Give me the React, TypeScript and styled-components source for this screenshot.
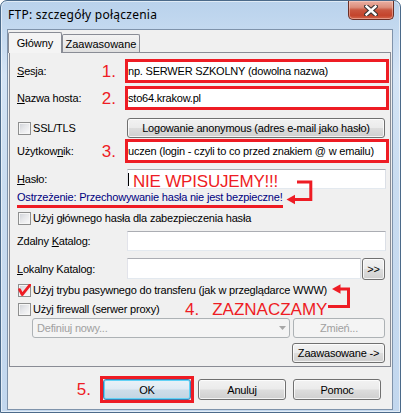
import React from 'react';
import styled, { createGlobalStyle, css } from 'styled-components';

const RED = '#ee1c24';
const UI_FONT = '"Liberation Sans", Arial, sans-serif';

const GlobalStyle = createGlobalStyle`
  html, body { margin: 0; padding: 0; background: #fff; }
  body { font-family: ${UI_FONT}; font-size: 11px; letter-spacing: -0.2px; color: #000; }
  * { box-sizing: border-box; }
`;

const Window = styled.div`
  width: 401px;
  height: 413px;
  border: 1px solid #4b6a8a;
  border-radius: 7px 7px 0 0;
  padding: 0 7px 2px 6px;
  display: flex;
  flex-direction: column;
  background: linear-gradient(180deg, #b9d2ec 0%, #d4e4f5 18%, #c9dcf0 45%, #c2d7ee 100%);
  box-shadow: inset 0 0 0 1px rgba(255, 255, 255, 0.55);
`;

const TitleBar = styled.div`
  height: 28px;
  flex: none;
  display: flex;
  align-items: flex-start;
  justify-content: space-between;
`;

const Title = styled.div`
  margin-top: 6px;
  padding-left: 1px;
  font-family: "Noto Sans", "Open Sans", sans-serif;
  font-size: 12px;
  letter-spacing: 0.25px;
  line-height: 16px;
  color: #000;
`;

const CloseButton = styled.div`
  width: 46px;
  height: 19px;
  margin-right: -1px;
  border: 1px solid #6a2f26;
  border-top: none;
  border-radius: 0 0 5px 5px;
  background: linear-gradient(180deg, #eab0a3 0%, #dc8e7c 35%, #c9563f 50%, #c4442c 80%, #d2664c 100%);
  box-shadow: inset 0 0 0 1px rgba(255, 220, 210, 0.45);
  display: flex;
  align-items: center;
  justify-content: center;
`;

const Client = styled.div`
  flex: 1;
  display: flex;
  flex-direction: column;
  border: 1px solid #7f93ab;
  background: #f0f0f0;
`;

const TabRow = styled.div`
  height: 22px;
  padding-top: 2px;
  display: flex;
  align-items: flex-end;
  flex: none;
`;

const Tab = styled.div<{ $active?: boolean }>`
  display: flex;
  align-items: center;
  justify-content: center;
  border: 1px solid #898c95;
  border-bottom: none;
  border-radius: 2px 2px 0 0;
  white-space: nowrap;
  letter-spacing: 0;
  ${(p) =>
    p.$active
      ? css`
          width: 54px;
          height: 21px;
          margin-bottom: -1px;
          background: #f4f4f4;
          position: relative;
          z-index: 1;
        `
      : css`
          width: 78px;
          height: 18px;
          background: linear-gradient(180deg, #f3f3f3 0%, #ebebeb 50%, #dfdfdf 100%);
        `}
`;

const Panel = styled.div`
  position: relative;
  margin: 0 1px;
  border: 1px solid #898c95;
  background: #f0f0f0;
  padding: 0 4px 3px 7px;
  display: flex;
  flex-direction: column;
  flex: none;
`;

const Row = styled.div<{ $mt: number; $h?: number; $align?: string; $justify?: string }>`
  display: flex;
  align-items: ${(p) => p.$align ?? 'center'};
  justify-content: ${(p) => p.$justify ?? 'flex-start'};
  margin-top: ${(p) => p.$mt}px;
  ${(p) => (p.$h ? `height: ${p.$h}px;` : '')}
`;

const LabelCell = styled.div<{ $w?: number }>`
  width: ${(p) => p.$w ?? 110}px;
  flex: none;
  display: flex;
  align-items: center;
  justify-content: space-between;
  align-self: stretch;
`;

const Label = styled.span`
  white-space: nowrap;
  line-height: 13px;
`;

const Accel = styled.span`
  text-decoration: underline;
`;

const Marker = styled.span<{ $mr?: number }>`
  color: ${RED};
  font-family: ${UI_FONT};
  font-size: 17px;
  letter-spacing: 0;
  line-height: 17px;
  margin-right: ${(p) => p.$mr ?? 11}px;
  white-space: nowrap;
`;

const TextBox = styled.div<{ $marked?: boolean; $w?: number }>`
  ${(p) => (p.$w ? `width: ${p.$w}px; flex: none;` : 'flex: 1;')}
  height: 100%;
  background: #fff;
  display: flex;
  align-items: center;
  white-space: nowrap;
  overflow: visible;
  ${(p) =>
    p.$marked
      ? css`
          border: 3px solid ${RED};
          margin: 0 -3px 0 -2px;
          padding-left: 0;
        `
      : css`
          border: 1px solid;
          border-color: #abadb3 #dbdfe6 #e3e9ef #e2e3ea;
          padding-left: 0;
        `}
`;

const Caret = styled.span`
  width: 1px;
  height: 13px;
  background: #000;
  flex: none;
`;

const Shout = styled.span`
  color: ${RED};
  font-size: 17px;
  letter-spacing: -0.2px;
  line-height: 18px;
  margin-left: 4px;
  align-self: flex-start;
  margin-top: 3px;
`;

const Warning = styled.span`
  display: inline-block;
  color: #000080;
  line-height: 13px;
  padding-bottom: 1px;
  border-bottom: 3px solid ${RED};
  white-space: nowrap;
`;

const CheckBox = styled.span`
  width: 13px;
  height: 13px;
  flex: none;
  margin-left: 1px;
  border: 1px solid #8e8f8f;
  background: linear-gradient(135deg, #cdd0d5 0%, #e6e7ea 45%, #fbfbfb 100%);
  box-shadow: inset 0 0 0 1px #f6f6f6;
  display: flex;
  align-items: center;
  justify-content: center;
`;

const CheckText = styled.span`
  margin-left: 2px;
  white-space: nowrap;
  line-height: 13px;
`;

const CheckGroup = styled.div<{ $w?: number }>`
  display: flex;
  align-items: center;
  ${(p) => (p.$w ? `width: ${p.$w}px; flex: none;` : '')}
`;

type Kind = 'normal' | 'default' | 'disabled';

const Btn = styled.div<{ $w: number; $h?: number; $kind?: Kind; $ml?: number; $mr?: number }>`
  width: ${(p) => p.$w}px;
  height: ${(p) => p.$h ?? 20}px;
  flex: none;
  margin-left: ${(p) => p.$ml ?? 0}px;
  margin-right: ${(p) => p.$mr ?? 0}px;
  display: flex;
  align-items: center;
  justify-content: center;
  font-family: ${UI_FONT};
  font-size: 11px;
  white-space: nowrap;
  border-radius: 3px;
  border: 1px solid #707070;
  color: #000;
  background: linear-gradient(180deg, #f2f2f2 0%, #ebebeb 48%, #dddddd 52%, #cfcfcf 100%);
  box-shadow: inset 0 0 0 1px rgba(255, 255, 255, 0.75);
  ${(p) =>
    p.$kind === 'default' &&
    css`
      border-color: #3c7fb1;
      background: linear-gradient(180deg, #eaf2f8 0%, #dfeaf3 48%, #cddde9 52%, #c3d5e3 100%);
      box-shadow: inset 0 0 0 1px #62d2f6;
    `}
  ${(p) =>
    p.$kind === 'disabled' &&
    css`
      border-color: #adb2b5;
      background: #f4f4f4;
      color: #a0a0a0;
      box-shadow: none;
    `}
`;

const Combo = styled.div`
  width: 258px;
  height: 20px;
  flex: none;
  margin-left: 15px;
  border: 1px solid #adb2b5;
  border-radius: 3px;
  background: #f4f4f4;
  color: #a0a0a0;
  display: flex;
  align-items: center;
  justify-content: space-between;
  padding: 0 3px 0 4px;
  white-space: nowrap;
`;

const Callout = styled.span`
  color: ${RED};
  font-size: 17px;
  letter-spacing: 0;
  line-height: 17px;
  white-space: nowrap;
  display: flex;
  gap: 13px;
`;

const Arrow = styled.svg<{ $left: number; $top: number }>`
  position: absolute;
  left: ${(p) => p.$left}px;
  top: ${(p) => p.$top}px;
  overflow: visible;
  pointer-events: none;
`;

const ButtonBar = styled.div`
  display: flex;
  justify-content: flex-end;
  align-items: center;
  gap: 7px;
  padding: 12px 11px 0 0;
`;

const OkFrame = styled.div`
  border: 3px solid ${RED};
  margin: -3px;
  display: flex;
`;

const CloseGlyph = () => (
  <svg width="14" height="11" viewBox="0 0 14 11">
    <path d="M2.5 1.5 L11.5 9.5 M11.5 1.5 L2.5 9.5" stroke="#3a3434" strokeWidth="4.6" strokeLinecap="square" fill="none" />
    <path d="M2.5 1.5 L11.5 9.5 M11.5 1.5 L2.5 9.5" stroke="#ffffff" strokeWidth="2.4" strokeLinecap="square" fill="none" />
  </svg>
);

const RedCheck = () => (
  <svg width="13" height="13" viewBox="0 0 13 13" style={{ margin: -1, flex: 'none' }}>
    <path d="M1.6 5.6 L4.2 10.6 L11.8 1.2" stroke={RED} strokeWidth="2.8" fill="none" strokeLinejoin="round" strokeLinecap="round" />
  </svg>
);

const ComboArrow = () => (
  <svg width="7" height="4" viewBox="0 0 7 4">
    <path d="M0 0 H7 L3.5 4 Z" fill="#a7a7a7" />
  </svg>
);

export default function App() {
  return (
    <>
      <GlobalStyle />
      <Window>
        <TitleBar>
          <Title>FTP: szczegóły połączenia</Title>
          <CloseButton>
            <CloseGlyph />
          </CloseButton>
        </TitleBar>
        <Client>
          <TabRow>
            <Tab $active>Główny</Tab>
            <Tab>Zaawasowane</Tab>
          </TabRow>
          <Panel>
            <Row $mt={6} $h={24}>
              <LabelCell>
                <Label>
                  <Accel>S</Accel>esja:
                </Label>
                <Marker>1.</Marker>
              </LabelCell>
              <TextBox $marked>np. SERWER SZKOLNY (dowolna nazwa)</TextBox>
            </Row>
            <Row $mt={3} $h={24}>
              <LabelCell>
                <Label>
                  <Accel>N</Accel>azwa hosta:
                </Label>
                <Marker>2.</Marker>
              </LabelCell>
              <TextBox $marked>sto64.krakow.pl</TextBox>
            </Row>
            <Row $mt={8} $h={20}>
              <LabelCell>
                <CheckGroup>
                  <CheckBox />
                  <CheckText>SSL/TLS</CheckText>
                </CheckGroup>
              </LabelCell>
              <Btn $w={258}>Logowanie anonymous (adres e-mail jako hasło)</Btn>
            </Row>
            <Row $mt={1} $h={24}>
              <LabelCell>
                <Label>
                  Użytkow<Accel>n</Accel>ik:
                </Label>
                <Marker>3.</Marker>
              </LabelCell>
              <TextBox $marked>uczen (login - czyli to co przed znakiem @ w emailu)</TextBox>
            </Row>
            <Row $mt={6} $h={20}>
              <LabelCell>
                <Label>
                  <Accel>H</Accel>asło:
                </Label>
              </LabelCell>
              <TextBox>
                <Caret />
                <Shout>NIE WPISUJEMY!!!</Shout>
              </TextBox>
            </Row>
            <Row $mt={2}>
              <Warning>Ostrzeżenie: Przechowywanie hasła nie jest bezpieczne!</Warning>
            </Row>
            <Row $mt={4} $h={13}>
              <CheckGroup>
                <CheckBox />
                <CheckText>Użyj głównego hasła dla zabezpieczenia hasła</CheckText>
              </CheckGroup>
            </Row>
            <Row $mt={6} $h={20}>
              <LabelCell>
                <Label>
                  Zdalny <Accel>K</Accel>atalog:
                </Label>
              </LabelCell>
              <TextBox />
            </Row>
            <Row $mt={7} $h={23} $align="flex-start">
              <LabelCell>
                <Label>
                  <Accel>L</Accel>okalny Katalog:
                </Label>
              </LabelCell>
              <TextBox $w={234} style={{ height: 21 }} />
              <Btn $w={23} $h={22} $ml={1}>
                &gt;&gt;
              </Btn>
            </Row>
            <Row $mt={3} $h={13}>
              <CheckGroup>
                <CheckBox>
                  <RedCheck />
                </CheckBox>
                <CheckText>Użyj trybu pasywnego do transferu (jak w przeglądarce WWW)</CheckText>
              </CheckGroup>
            </Row>
            <Row $mt={6} $h={13}>
              <CheckGroup $w={168}>
                <CheckBox />
                <CheckText>Użyj firewall (serwer proxy)</CheckText>
              </CheckGroup>
              <Callout>
                <span>4.</span>
                <span>ZAZNACZAMY</span>
              </Callout>
            </Row>
            <Row $mt={2} $h={20}>
              <Combo>
                <span>Definiuj nowy...</span>
                <ComboArrow />
              </Combo>
              <Btn $w={92} $ml={3} $kind="disabled">
                Zmień...
              </Btn>
            </Row>
            <Row $mt={5} $h={20} $justify="flex-end">
              <Btn $w={93} $mr={1}>
                Zaawasowane -&gt;
              </Btn>
            </Row>
            <Arrow $left={275} $top={124} width="30" height="30" viewBox="285 177 30 30">
              <path d="M297 182 H310.8 V199.5 H293" stroke={RED} strokeWidth="3" fill="none" />
              <path d="M286.5 199.5 L295 194.8 L295 204.2 Z" fill={RED} />
            </Arrow>
            <Arrow $left={318} $top={229} width="34" height="30" viewBox="328 282 34 30">
              <path d="M338 289 H348.5 V306.5 H328" stroke={RED} strokeWidth="3" fill="none" />
              <path d="M332 289 L340.5 284.3 L340.5 293.7 Z" fill={RED} />
            </Arrow>
          </Panel>
          <ButtonBar>
            <Marker $mr={5}>5.</Marker>
            <OkFrame>
              <Btn $w={88} $h={21} $kind="default">
                OK
              </Btn>
            </OkFrame>
            <Btn $w={88} $h={21}>
              Anuluj
            </Btn>
            <Btn $w={88} $h={21}>
              Pomoc
            </Btn>
          </ButtonBar>
        </Client>
      </Window>
    </>
  );
}
